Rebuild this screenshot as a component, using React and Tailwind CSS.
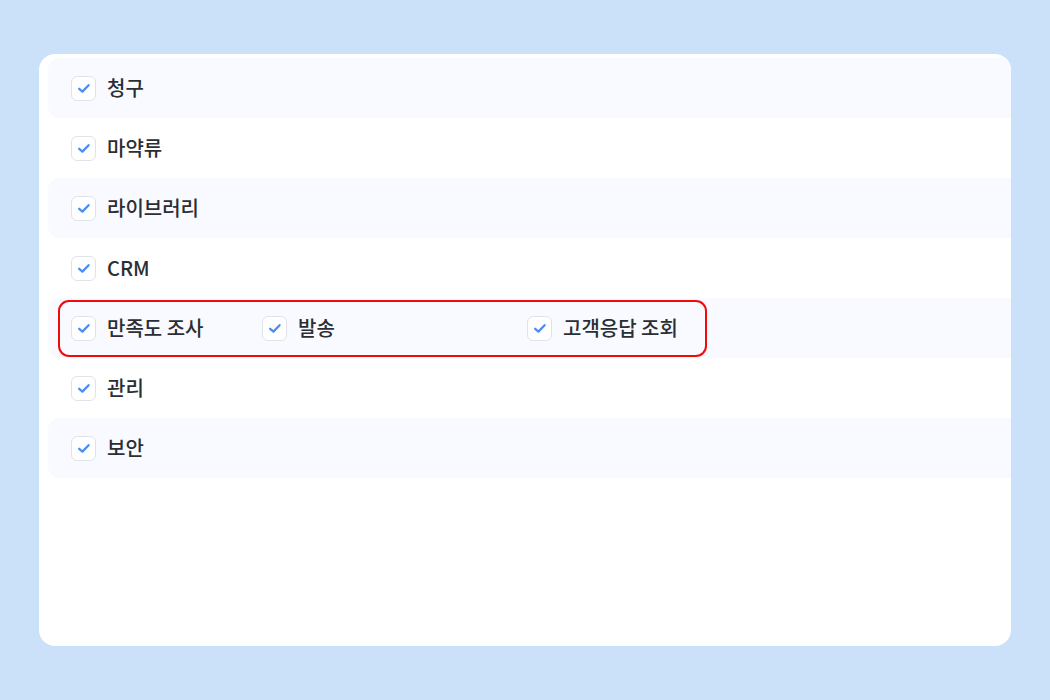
import React from 'react';

const rows = [
  ['청구'],
  ['마약류'],
  ['라이브러리'],
  ['CRM'],
  ['만족도 조사', '발송', '고객응답 조회'],
  ['관리'],
  ['보안'],
];

function Check() {
  return (
    <span className="flex h-[25px] w-[25px] shrink-0 items-center justify-center rounded-[6px] border border-[#dfe3ea] bg-white">
      <svg width="16" height="16" viewBox="0 0 16 16" fill="none">
        <path d="M3.2 8.8 L6.4 11.6 L12.6 5.2" stroke="#4a8ef5" strokeWidth="2.3" strokeLinecap="round" strokeLinejoin="round" />
      </svg>
    </span>
  );
}

function Item({ label, className = '' }) {
  return (
    <div className={`flex items-center gap-[11px] ${className}`}>
      <Check />
      <span className="text-[20px] font-medium leading-none text-[#2b2e34]">{label}</span>
    </div>
  );
}

export default function App() {
  return (
    <div
      className="flex h-[700px] w-[1050px] items-start bg-[#cbe1f9] px-[39px] pt-[54px]"
      style={{ fontFamily: '"Noto Sans CJK KR", "Noto Sans", sans-serif' }}
    >
      <div className="h-[592px] w-[972px] overflow-hidden rounded-[16px] bg-white pl-[9px] pt-[4px]">
        {rows.map((items, i) => (
          <div
            key={i}
            className={`relative flex h-[60px] w-[1000px] items-center rounded-l-[12px] pl-[23px] ${i % 2 === 0 ? 'bg-[#f8faff]' : 'bg-white'}`}
          >
            {items.length === 1 ? (
              <Item label={items[0]} />
            ) : (
              <>
                <Item label={items[0]} className="w-[191px]" />
                <Item label={items[1]} className="w-[265px]" />
                <Item label={items[2]} />
                <div className="pointer-events-none absolute left-[10px] top-[2px] h-[57px] w-[649px] rounded-[11px] border-2 border-[#f00a0a]" />
              </>
            )}
          </div>
        ))}
      </div>
    </div>
  );
}
